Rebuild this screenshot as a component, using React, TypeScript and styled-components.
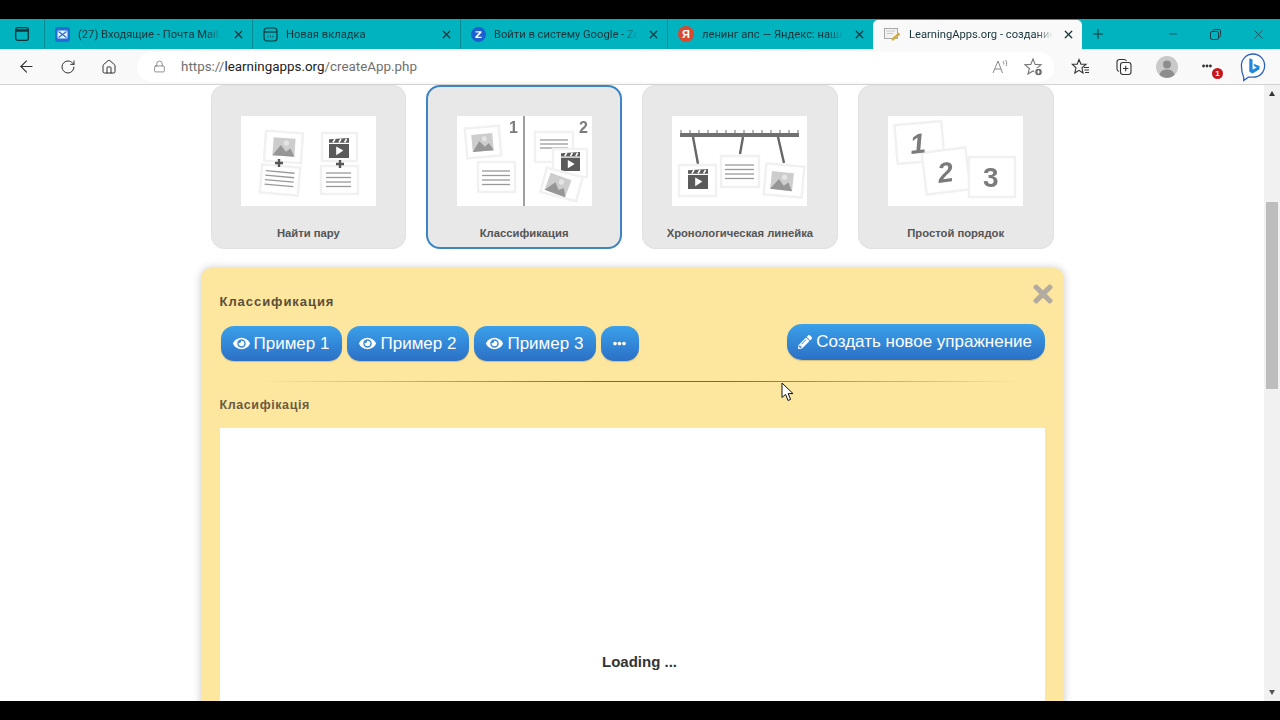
import React from "react";
import styled, { createGlobalStyle } from "styled-components";
import { ArrowLeft, RotateCw, Home, Lock, Plus, Minus, X } from "lucide-react";
import { FaEye, FaPencilAlt, FaEllipsisH, FaTimes } from "react-icons/fa";

const GlobalStyle = createGlobalStyle`
	html, body {
		margin: 0;
		height: 100%;
		overflow: hidden;
		background: #000;
		font-family: "Liberation Sans", Arial, sans-serif;
	}
`;

const Screen = styled.div`
	position: relative;
	width: 1280px;
	height: 720px;
	display: flex;
	flex-direction: column;
	overflow: hidden;
`;

const BlackBar = styled.div<{ $height: number }>`
	height: ${(p) => p.$height}px;
	flex: none;
	background: #000;
`;

const TabStrip = styled.div`
	height: 30px;
	flex: none;
	display: flex;
	align-items: stretch;
	background: #00b3bf;
	color: #17343a;
	font-family: Roboto, "Noto Sans", sans-serif;
	font-size: 11.2px;
`;

const TabsIcon = styled.div`
	width: 44px;
	flex: none;
	display: flex;
	align-items: center;
	justify-content: center;
`;

const Tab = styled.div<{ $width: number; $active?: boolean; $sep?: boolean }>`
	width: ${(p) => p.$width}px;
	flex: none;
	display: flex;
	align-items: center;
	gap: 8px;
	padding: 0 7px 0 10px;
	box-sizing: border-box;
	border-left: 1px solid ${(p) => (p.$sep ? "#078b94" : "transparent")};
	background: ${(p) => (p.$active ? "#f9f9f9" : "transparent")};
	border-radius: ${(p) => (p.$active ? "5px 5px 0 0" : "0")};
	margin-top: ${(p) => (p.$active ? "1px" : "0")};
`;

const TabTitle = styled.span`
	flex: 1;
	min-width: 0;
	white-space: nowrap;
	-webkit-mask-image: linear-gradient(to right, #000 88%, transparent 99%);
	mask-image: linear-gradient(to right, #000 88%, transparent 99%);
`;

const NewTab = styled.div`
	width: 32px;
	flex: none;
	display: flex;
	align-items: center;
	justify-content: center;
	color: #12343a;
`;

const WindowControls = styled.div`
	margin-left: auto;
	display: flex;
	align-items: center;
	color: #17404a;
`;

const WindowButton = styled.div`
	width: 43px;
	height: 100%;
	display: flex;
	align-items: center;
	justify-content: center;
`;

const Toolbar = styled.div`
	height: 35px;
	flex: none;
	display: flex;
	align-items: center;
	background: #f9f9f9;
	border-bottom: 1px solid #d2d2d2;
	color: #333;
`;

const NavButton = styled.div`
	width: 41px;
	flex: none;
	display: flex;
	align-items: center;
	justify-content: center;
`;

const NavGroup = styled.div`
	display: flex;
	padding-left: 6px;
	width: 137px;
	flex: none;
	box-sizing: border-box;
`;

const AddressBar = styled.div`
	width: 917px;
	height: 30px;
	flex: none;
	display: flex;
	align-items: center;
	border-radius: 15px;
	background: #fff;
	padding: 0 3px 0 16px;
	box-sizing: border-box;
	font-family: Roboto, "Noto Sans", sans-serif;
	font-size: 13.4px;
	color: #6f6f6f;
`;

const UrlText = styled.span`
	margin-left: 15px;
	flex: 1;
	b {
		font-weight: 400;
		color: #222;
	}
`;

const AddressIcon = styled.div`
	width: 34px;
	display: flex;
	justify-content: center;
	align-items: center;
	color: #777;
`;

const ToolIcons = styled.div`
	flex: 1;
	display: flex;
	align-items: center;
	padding-left: 14px;
	gap: 17px;
`;

const ToolSlot = styled.div`
	position: relative;
	width: 26px;
	height: 30px;
	display: flex;
	align-items: center;
	justify-content: center;
`;

const MenuDots = styled(FaEllipsisH)`
	margin: 0 6px 2px 0;
`;

const NoticeBadge = styled.span`
	position: absolute;
	right: 0;
	bottom: 3px;
	width: 11px;
	height: 11px;
	border-radius: 50%;
	background: #c4161c;
	color: #fff;
	font-size: 8px;
	line-height: 11px;
	font-weight: 700;
	text-align: center;
`;

const Viewport = styled.div`
	flex: 1;
	min-height: 0;
	display: flex;
	background: #fff;
	overflow: hidden;
`;

const Page = styled.div`
	flex: 1;
	min-width: 0;
	overflow: hidden;
`;

const Scrollbar = styled.div`
	width: 16px;
	flex: none;
	display: flex;
	flex-direction: column;
	align-items: center;
	background: #f1f1f1;
	position: relative;
`;

const ScrollArrow = styled.span<{ $down?: boolean }>`
	position: absolute;
	${(p) => (p.$down ? "bottom: 6px;" : "top: 6px;")}
	width: 0;
	height: 0;
	border-left: 3.5px solid transparent;
	border-right: 3.5px solid transparent;
	${(p) => (p.$down ? "border-top: 5px solid #555;" : "border-bottom: 5px solid #333;")}
`;

const ScrollThumb = styled.div`
	width: 12px;
	height: 187px;
	margin-top: 117px;
	background: #bdbdbd;
`;

const Cards = styled.div`
	width: 843px;
	margin: 0 auto;
	display: grid;
	grid-template-columns: repeat(4, 1fr);
	gap: 20px;
`;

const Card = styled.div<{ $selected?: boolean }>`
	height: 164px;
	box-sizing: border-box;
	display: flex;
	flex-direction: column;
	align-items: center;
	padding-top: ${(p) => (p.$selected ? "28.5px" : "31px")};
	background: #e8e8e8;
	border-radius: 14px;
	border: ${(p) => (p.$selected ? "2.5px solid #3c84c2" : "0")};
	box-shadow: ${(p) => (p.$selected ? "none" : "inset 0 0 0 1px #e2e2e2")};
`;

const Thumb = styled.svg`
	width: 135px;
	height: 90px;
	background: #fff;
	flex: none;
	filter: blur(0.35px);
`;

const CardLabel = styled.div`
	margin-top: 21px;
	font-size: 11.25px;
	font-weight: 700;
	color: #555;
`;

const Panel = styled.section`
	width: 863px;
	height: 500px;
	margin: 19px auto 0;
	padding: 19px;
	box-sizing: border-box;
	background: #fde79f;
	border-radius: 10px;
	box-shadow: 0 0 8px rgba(0, 0, 0, 0.22);
`;

const PanelHead = styled.div`
	height: 27px;
	display: flex;
	justify-content: space-between;
	align-items: flex-start;
	color: #b3aba0;
`;

const PanelTitle = styled.h2`
	margin: 7px 0 0;
	font-size: 13px;
	font-weight: 700;
	letter-spacing: 0.95px;
	color: #5c4e38;
`;

const CloseIcon = styled(FaTimes)`
	margin: -7px -12px 0 0;
`;

const ActionRow = styled.div`
	margin-top: 10px;
	display: flex;
	align-items: flex-end;
	gap: 5.5px;
	padding: 0 0 0 1px;
`;

const BlueButton = styled.button<{ $wide?: boolean }>`
	height: ${(p) => (p.$wide ? 36 : 35)}px;
	margin-left: ${(p) => (p.$wide ? "auto" : 0)};
	margin-bottom: ${(p) => (p.$wide ? "1px" : 0)};
	padding: 0 12.5px 0 ${(p) => (p.$wide ? 11.5 : 12)}px;
	display: flex;
	align-items: center;
	gap: 4px;
	border: 0;
	border-radius: ${(p) => (p.$wide ? 15 : 13)}px;
	background: linear-gradient(#3ba0ea, #2b70c6);
	box-shadow: 0 1px 1px rgba(90, 70, 20, 0.25);
	color: #fff;
	font-family: inherit;
	font-size: 17px;
	white-space: nowrap;
`;

const Divider = styled.hr`
	height: 1px;
	margin: 20px 25px 0 40px;
	border: 0;
	background: linear-gradient(to right, transparent, #7a6a30 45%, #7a6a30 60%, transparent);
`;

const SubTitle = styled.h3`
	margin: 16px 0 0;
	font-size: 12.5px;
	font-weight: 700;
	letter-spacing: 0.6px;
	color: #6a5b43;
`;

const Frame = styled.div`
	margin-top: 16px;
	height: 300px;
	background: #fff;
	padding: 225px 0 0 15px;
	box-sizing: border-box;
	text-align: center;
	font-size: 15px;
	font-weight: 700;
	color: #333;
`;

const Cursor = styled.svg`
	position: absolute;
	left: 781px;
	top: 382px;
`;

const Photo = ({ x, y, w = 21, r = 0 }: { x: number; y: number; w?: number; r?: number }) => {
	const h = w * 0.82;
	return (
		<g transform={`rotate(${r} ${x + w / 2} ${y + h / 2})`}>
			<rect x={x} y={y} width={w} height={h} fill="#cdcdcd" />
			<path d={`M${x} ${y + h}L${x + w * 0.35} ${y + h * 0.4}L${x + w * 0.6} ${y + h * 0.75}L${x + w * 0.8} ${y + h * 0.55}L${x + w} ${y + h}Z`} fill="#969696" />
			<circle cx={x + w * 0.6} cy={y + h * 0.28} r={w * 0.12} fill="#e4e4e4" />
		</g>
	);
};

const Clapper = ({ x, y, w = 20 }: { x: number; y: number; w?: number }) => (
	<g>
		<rect x={x} y={y + w * 0.3} width={w} height={w * 0.7} fill="#5a5a5a" />
		<path d={`M${x} ${y + w * 0.24}V${y + w * 0.06}L${x + w} ${y}V${y + w * 0.24}Z`} fill="#5a5a5a" />
		<path d={`M${x + w * 0.2} ${y + w * 0.22}l${w * 0.1} -${w * 0.18}M${x + w * 0.5} ${y + w * 0.22}l${w * 0.1} -${w * 0.18}M${x + w * 0.78} ${y + w * 0.22}l${w * 0.1} -${w * 0.18}`} stroke="#fff" strokeWidth="1.6" />
		<path d={`M${x + w * 0.36} ${y + w * 0.42}L${x + w * 0.72} ${y + w * 0.63}L${x + w * 0.36} ${y + w * 0.86}Z`} fill="#fff" />
	</g>
);

const Lines = ({ x, y, w, n = 4, step = 4.5 }: { x: number; y: number; w: number; n?: number; step?: number }) => (
	<g stroke="#999" strokeWidth="1.3">
		{Array.from({ length: n }, (_, i) => (
			<line key={i} x1={x} y1={y + i * step} x2={x + w} y2={y + i * step} />
		))}
	</g>
);

const Sheet = ({ x, y, w, h, r = 0 }: { x: number; y: number; w: number; h: number; r?: number }) => (
	<rect x={x} y={y} width={w} height={h} fill="#fff" stroke="#f1f1f1" strokeWidth="2.5" transform={`rotate(${r} ${x + w / 2} ${y + h / 2})`} />
);

const Cross = ({ x, y }: { x: number; y: number }) => (
	<path d={`M${x - 4} ${y}H${x + 4}M${x} ${y - 4}V${y + 4}`} stroke="#555" strokeWidth="2.4" />
);

const NumberMark = ({ x, y, size, r = 0, italic, children }: { x: number; y: number; size: number; r?: number; italic?: boolean; children: string }) => (
	<text
		x={x}
		y={y}
		fontSize={size}
		fontWeight="700"
		fontStyle={italic ? "italic" : "normal"}
		fontFamily="Liberation Sans, sans-serif"
		fill="#7b7b7b"
		transform={`rotate(${r} ${x} ${y})`}
	>
		{children}
	</text>
);

const PairThumb = () => (
	<Thumb viewBox="0 0 135 90">
		<Sheet x={24} y={16} w={37} h={30} r={4} />
		<Photo x={32} y={22} w={22} r={4} />
		<Sheet x={20} y={50} w={38} h={28} r={5} />
		<g transform="rotate(5 39 63)">
			<Lines x={24} y={56} w={29} />
		</g>
		<Cross x={38} y={47} />
		<Sheet x={81} y={17} w={35} h={28} />
		<Clapper x={88} y={22} />
		<Sheet x={80} y={50} w={37} h={28} />
		<Lines x={85} y={57} w={25} />
		<Cross x={99} y={48} />
	</Thumb>
);

const GroupThumb = () => (
	<Thumb viewBox="0 0 135 90">
		<rect x={66} y={0} width={2} height={90} fill="#a0a0a0" />
		<NumberMark x={52} y={17} size={16}>1</NumberMark>
		<NumberMark x={122} y={17} size={16}>2</NumberMark>
		<Sheet x={9} y={11} w={34} h={30} r={-5} />
		<Photo x={15} y={18} w={21} r={-5} />
		<Sheet x={21} y={46} w={37} h={30} />
		<Lines x={25} y={55} w={28} />
		<Sheet x={78} y={16} w={38} h={30} />
		<Lines x={83} y={24} w={28} step={4} n={3} />
		<Sheet x={96} y={33} w={34} h={28} />
		<Clapper x={104} y={36} w={19} />
		<Sheet x={86} y={56} w={37} h={25} r={15} />
		<Photo x={90} y={60} w={22} r={20} />
	</Thumb>
);

const TimelineThumb = () => {
	const ticks = Array.from({ length: 14 }, (_, i) => 9 + i * 9);
	return (
		<Thumb viewBox="0 0 135 90">
			<rect x={8} y={17} width={119} height={4} fill="#707070" />
			{ticks.map((t) => (
				<line key={t} x1={t} y1={14} x2={t} y2={18} stroke="#707070" />
			))}
			<path d="M21 21L26 48M71 21L68 38M106 21L112 47" stroke="#666" strokeWidth="2.4" />
			<Sheet x={7} y={49} w={37} h={31} />
			<Clapper x={16} y={53} w={20} />
			<Sheet x={49} y={40} w={38} h={31} />
			<Lines x={53} y={49} w={29} />
			<Sheet x={93} y={49} w={38} h={31} r={5} />
			<Photo x={99} y={56} w={22} r={6} />
		</Thumb>
	);
};

const OrderThumb = () => (
	<Thumb viewBox="0 0 135 90">
		<Sheet x={8} y={7} w={47} h={39} r={-5} />
		<Sheet x={36} y={34} w={44} h={42} r={-7} />
		<Sheet x={81} y={41} w={46} h={40} />
		<NumberMark x={23} y={38} size={28} r={-6} italic>1</NumberMark>
		<NumberMark x={51} y={67} size={28} r={-8} italic>2</NumberMark>
		<NumberMark x={95} y={71} size={28}>3</NumberMark>
	</Thumb>
);

const MailIcon = () => (
	<svg width="15" height="15" viewBox="0 0 15 15">
		<rect width="15" height="15" rx="3" fill="#1f6fd6" />
		<rect x="2.5" y="3.5" width="10" height="8" rx="1" fill="#e8f0fb" />
		<path d="M3.5 4.5L11.5 10.5M11.5 4.5L3.5 10.5" stroke="#1f6fd6" strokeWidth="1.2" />
	</svg>
);

const NewTabIcon = () => (
	<svg width="15" height="15" viewBox="0 0 15 15" fill="none" stroke="#12343a" strokeWidth="1.2">
		<rect x="1" y="1" width="13" height="13" rx="3" />
		<path d="M1 5H14" />
		<path d="M4.5 9.5h.8M7 9.5h.8M9.5 9.5h.8" strokeWidth="1.4" />
	</svg>
);

const ZoomIcon = () => (
	<svg width="15" height="15" viewBox="0 0 15 15">
		<circle cx="7.5" cy="7.5" r="7.5" fill="#1b5fd1" />
		<path d="M4.5 4.2H10.5V5.4L6.6 9.8H10.6V11H4.3V9.8L8.2 5.4H4.5Z" fill="#fff" />
	</svg>
);

const YandexIcon = () => (
	<svg width="16" height="16" viewBox="0 0 16 16">
		<circle cx="8" cy="8" r="8" fill="#d8492f" />
		<text x="8" y="12" fontSize="11" fontWeight="700" fill="#fff" textAnchor="middle" fontFamily="Liberation Sans, sans-serif">Я</text>
	</svg>
);

const LearningIcon = () => (
	<svg width="17" height="15" viewBox="0 0 17 15">
		<rect x="0.5" y="1.5" width="13" height="10" fill="#f2f2f2" stroke="#a8a8a8" />
		<path d="M2.5 4H11M2.5 6.5H9" stroke="#c8c8c8" />
		<path d="M8 13L15.5 6.5" stroke="#d0ad3c" strokeWidth="2.4" />
	</svg>
);

const TabStripIcon = () => (
	<svg width="14" height="14" viewBox="0 0 14 14" fill="none" stroke="#12343a" strokeWidth="1.3">
		<rect x="0.7" y="0.7" width="12.6" height="12.6" rx="2" />
		<path d="M0.7 3.5H13.3" strokeWidth="2.5" />
	</svg>
);

const RestoreIcon = () => (
	<svg width="11" height="11" viewBox="0 0 11 11" fill="none" stroke="currentColor">
		<rect x="0.5" y="2.5" width="8" height="8" rx="1.5" />
		<path d="M3 2.5V2A1.5 1.5 0 0 1 4.5 .5H9A1.5 1.5 0 0 1 10.5 2V6.5A1.5 1.5 0 0 1 9 8H8.5" />
	</svg>
);

const ReadAloudIcon = () => (
	<svg width="17" height="15" viewBox="0 0 17 15" fill="none" stroke="#888" strokeWidth="1">
		<path d="M1 14L6 2L10.5 14M2.8 10H9" />
		<path d="M11 2C12 3 12 4.5 11.5 5.5M13.5 1C15 2.5 15 5 14 7" />
	</svg>
);

const FavAddIcon = () => (
	<svg width="20" height="20" viewBox="0 0 20 20" fill="none" stroke="#777" strokeWidth="1.1">
		<path d="M9 2L11.2 7.4L17 7.8L12.6 11.5L14 17L9 14L4 17L5.4 11.5L1 7.8L6.8 7.4Z" />
		<circle cx="14.5" cy="15" r="3.8" fill="#666" stroke="#fff" />
		<path d="M12.8 15H16.2M14.5 13.3V16.7" stroke="#fff" />
	</svg>
);

const FavoritesIcon = () => (
	<svg width="20" height="20" viewBox="0 0 20 20" fill="none" stroke="#333" strokeWidth="1.1">
		<path d="M8 2.5L10 7.3H15L11 10.8L12 16L8 13.4L3.8 16L5 10.8L1.3 7.3H6.2Z" fill="#f9f9f9" />
		<path d="M13 10.5H18M13.5 13H18M14 15.5H18" />
	</svg>
);

const CollectionsIcon = () => (
	<svg width="20" height="20" viewBox="0 0 20 20" fill="none" stroke="#333" strokeWidth="1.1">
		<path d="M5 14.5C3.5 14 3 13 3 12V5C3 3.5 4 2.5 5.5 2.5H10C11 2.5 12 3 12.5 4" />
		<rect x="6.5" y="5.5" width="10.5" height="12" rx="2.5" />
		<path d="M11.7 8.8V14.2M9 11.5H14.4" />
	</svg>
);

const ProfileIcon = () => (
	<svg width="22" height="22" viewBox="0 0 22 22">
		<circle cx="11" cy="11" r="11" fill="#c9c9c9" />
		<circle cx="11" cy="8.5" r="4" fill="#8d8d8d" />
		<path d="M3.5 19C4.5 14.5 8 13.5 11 13.5S17.5 14.5 18.5 19A11 11 0 0 1 3.5 19Z" fill="#8d8d8d" />
	</svg>
);

const BingIcon = () => (
	<svg width="28" height="32" viewBox="0 0 28 32">
		<path d="M14 2C21 2 26.5 7.5 26.5 14.5C26.5 22 21 27 14 27H9L4 30.5V27C2.5 24 1.5 19 1.5 14.5C1.5 7.5 7 2 14 2Z" fill="#fff" stroke="#2a5fc4" strokeWidth="1.4" />
		<path d="M10 6.5L13.5 8V19L18 16.5L15.5 15.3L14.5 12.5L21 14.8V18.5L13.5 23L10 21Z" fill="#1e86dc" />
	</svg>
);

const ArrowCursor = () => (
	<Cursor width="13" height="20" viewBox="0 0 13 20">
		<path d="M1 1V15.5L4.6 12.4L7 18.5L9.6 17.4L7.2 11.6H12Z" fill="#fff" stroke="#111" strokeWidth="1" />
	</Cursor>
);

const tabs = [
	{ title: "(27) Входящие - Почта Mail.r", width: 208, icon: <MailIcon /> },
	{ title: "Новая вкладка", width: 208, icon: <NewTabIcon /> },
	{ title: "Войти в систему Google - Zc", width: 207, icon: <ZoomIcon /> },
	{ title: "ленинг апс — Яндекс: нашлс", width: 206, icon: <YandexIcon /> },
];

const cards = [
	{ label: "Найти пару", thumb: <PairThumb /> },
	{ label: "Классификация", thumb: <GroupThumb />, selected: true },
	{ label: "Хронологическая линейка", thumb: <TimelineThumb /> },
	{ label: "Простой порядок", thumb: <OrderThumb /> },
];

const App: React.FC = () => {
	return (
		<Screen>
			<GlobalStyle />
			<BlackBar $height={19} />
			<TabStrip>
				<TabsIcon>
					<TabStripIcon />
				</TabsIcon>
				{tabs.map((tab) => (
					<Tab key={tab.title} $width={tab.width} $sep>
						{tab.icon}
						<TabTitle>{tab.title}</TabTitle>
						<X size={13} strokeWidth={2.2} />
					</Tab>
				))}
				<Tab $width={209} $active>
					<LearningIcon />
					<TabTitle>LearningApps.org - создание</TabTitle>
					<X size={13} strokeWidth={2.2} />
				</Tab>
				<NewTab>
					<Plus size={16} strokeWidth={1.5} />
				</NewTab>
				<WindowControls>
					<WindowButton>
						<Minus size={12} strokeWidth={1.5} />
					</WindowButton>
					<WindowButton>
						<RestoreIcon />
					</WindowButton>
					<WindowButton>
						<X size={15} strokeWidth={1.3} />
					</WindowButton>
				</WindowControls>
			</TabStrip>
			<Toolbar>
				<NavGroup>
					<NavButton>
						<ArrowLeft size={19} strokeWidth={1.4} />
					</NavButton>
					<NavButton>
						<RotateCw size={16} strokeWidth={1.5} />
					</NavButton>
					<NavButton>
						<Home size={16} strokeWidth={1.5} />
					</NavButton>
				</NavGroup>
				<AddressBar>
					<Lock size={13} strokeWidth={1.3} color="#666" />
					<UrlText>
						https://<b>learningapps.org</b>/createApp.php
					</UrlText>
					<AddressIcon>
						<ReadAloudIcon />
					</AddressIcon>
					<AddressIcon>
						<FavAddIcon />
					</AddressIcon>
				</AddressBar>
				<ToolIcons>
					<ToolSlot>
						<FavoritesIcon />
					</ToolSlot>
					<ToolSlot>
						<CollectionsIcon />
					</ToolSlot>
					<ToolSlot>
						<ProfileIcon />
					</ToolSlot>
					<ToolSlot>
						<MenuDots size={10} color="#333" />
						<NoticeBadge>1</NoticeBadge>
					</ToolSlot>
					<ToolSlot>
						<BingIcon />
					</ToolSlot>
				</ToolIcons>
			</Toolbar>
			<Viewport>
				<Page>
					<Cards>
						{cards.map((card) => (
							<Card key={card.label} $selected={card.selected}>
								{card.thumb}
								<CardLabel>{card.label}</CardLabel>
							</Card>
						))}
					</Cards>
					<Panel>
						<PanelHead>
							<PanelTitle>Классификация</PanelTitle>
							<CloseIcon size={28} />
						</PanelHead>
						<ActionRow>
							{[1, 2, 3].map((n) => (
								<BlueButton key={n}>
									<FaEye size={17} /> Пример {n}
								</BlueButton>
							))}
							<BlueButton>
								<FaEllipsisH size={13} />
							</BlueButton>
							<BlueButton $wide>
								<FaPencilAlt size={14} /> Создать новое упражнение
							</BlueButton>
						</ActionRow>
						<Divider />
						<SubTitle>Класифікація</SubTitle>
						<Frame>Loading ...</Frame>
					</Panel>
				</Page>
				<Scrollbar>
					<ScrollArrow />
					<ScrollThumb />
					<ScrollArrow $down />
				</Scrollbar>
			</Viewport>
			<BlackBar $height={19} />
			<ArrowCursor />
		</Screen>
	);
};

export default App;
